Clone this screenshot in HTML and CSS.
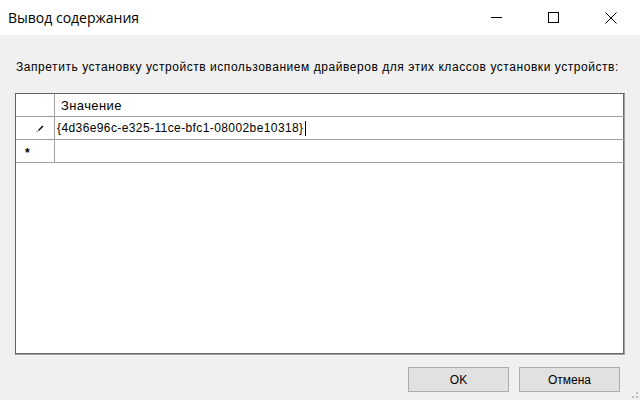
FILE: index.html
```html
<!DOCTYPE html>
<html lang="ru">
<head>
    <meta charset="UTF-8">
    <title>Вывод содержания</title>
    <link rel="stylesheet" href="styles.css">
</head>
<body>
    <div class="window">
        <div class="titlebar">
            <span class="title">Вывод содержания</span>
            <div class="controls">
                <span class="ctl">
                    <svg width="11" height="11" viewBox="0 0 11 11"><path d="M0 5.5h11" stroke="#000" stroke-width="1"/></svg>
                </span>
                <span class="ctl">
                    <svg width="11" height="11" viewBox="0 0 11 11"><rect x="0.5" y="0.5" width="10" height="10" fill="none" stroke="#000"/></svg>
                </span>
                <span class="ctl">
                    <svg width="12" height="12" viewBox="0 0 12 12"><path d="M0.5 0.5l11 11M11.5 0.5l-11 11" stroke="#000" stroke-width="1"/></svg>
                </span>
            </div>
        </div>

        <div class="content">
            <p class="prompt">Запретить установку устройств использованием драйверов для этих классов установки устройств:</p>

            <!-- value grid -->
            <div class="grid">
                <div class="row head">
                    <div class="rowhead"></div>
                    <div class="cell">Значение</div>
                </div>
                <div class="row">
                    <div class="rowhead pencil">
                        <svg width="8" height="8" viewBox="0 0 8 8"><path d="M2 7l0.5-1.5 4-4 1 1-4 4z" fill="#000"/><path d="M0 7.5h1.5" stroke="#888"/></svg>
                    </div>
                    <div class="cell">{4d36e96c-e325-11ce-bfc1-08002be10318}<span class="caret"></span></div>
                </div>
                <div class="row">
                    <div class="rowhead new"><span class="star">*</span></div>
                    <div class="cell"></div>
                </div>
            </div>

            <div class="buttons">
                <button class="btn">OK</button>
                <button class="btn">Отмена</button>
            </div>
        </div>
        <div class="grip"></div>
    </div>
</body>
</html>
```

FILE: styles.css
```css
* {
    margin: 0;
    padding: 0;
    box-sizing: border-box;
}

body {
    font-family: 'Liberation Sans', Arial, sans-serif;
    background: #f0f0f0;
    width: 640px;
    height: 400px;
    overflow: hidden;
}

.window {
    position: relative;
    height: 400px;
    display: flex;
    flex-direction: column;
}

.titlebar {
    height: 35px;
    background: white;
    display: flex;
    align-items: center;
    justify-content: space-between;
}

.title {
    font-family: 'Open Sans', 'Noto Sans', sans-serif;
    font-size: 14px;
    color: #000;
    padding-left: 8px;
}

.controls {
    display: flex;
    height: 100%;
    margin-right: 1px;
}

.ctl {
    width: 57px;
    display: flex;
    align-items: center;
    justify-content: center;
}

.content {
    flex: 1;
    padding: 25px 15px 0 15px;
    display: flex;
    flex-direction: column;
}

.prompt {
    font-size: 12px;
    letter-spacing: 0.55px;
    color: #000;
    padding-left: 1px;
    height: 33px;
}

.grid {
    width: 610px;
    height: 262px;
    background: white;
    border-top: 1px solid #646464;
    border-left: 1px solid #646464;
    border-right: 1px solid #a0a0a0;
    border-bottom: 1px solid #a0a0a0;
    box-shadow: inset -1px -1px 0 #696969;
}

.row {
    display: flex;
    height: 23px;
    border-bottom: 1px solid #a0a0a0;
}

.rowhead {
    width: 39px;
    border-right: 1px solid #a0a0a0;
    display: flex;
    align-items: center;
}

.pencil {
    padding-left: 20px;
}

.new {
    padding-left: 9px;
}

.cell {
    flex: 1;
    font-size: 12px;
    letter-spacing: 0.4px;
    padding-left: 2px;
    display: flex;
    align-items: center;
    color: #000;
}

.head .cell {
    font-size: 13px;
    padding-left: 6px;
}

.caret {
    display: inline-block;
    width: 1px;
    height: 15px;
    background: #000;
    margin-left: 1px;
}

.star {
    font-size: 12px;
    font-weight: bold;
    padding-top: 3px;
}

.buttons {
    display: flex;
    justify-content: flex-end;
    gap: 10px;
    padding: 12px 5px 0 0;
}

.btn {
    width: 101px;
    height: 25px;
    background: #e1e1e1;
    border: 1px solid #adadad;
    font-family: 'Liberation Sans', Arial, sans-serif;
    font-size: 12px;
    color: #000;
}

.grip {
    position: absolute;
    right: 2px;
    bottom: 2px;
    width: 6px;
    height: 6px;
    background:
        linear-gradient(#bdbdbd, #bdbdbd) 4px 0 / 2px 2px no-repeat,
        linear-gradient(#bdbdbd, #bdbdbd) 0 4px / 2px 2px no-repeat,
        linear-gradient(#bdbdbd, #bdbdbd) 4px 4px / 2px 2px no-repeat;
}
```
